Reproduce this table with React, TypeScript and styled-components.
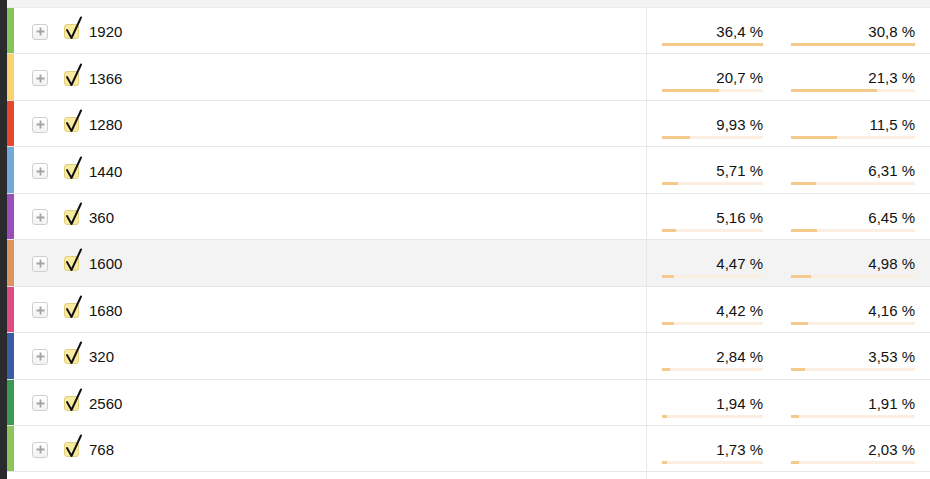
import React from "react";
import styled, { createGlobalStyle } from "styled-components";

const Global = createGlobalStyle`
  html, body { margin: 0; padding: 0; background: #fff; }
  body { font-family: "Liberation Sans", Arial, sans-serif; color: #111; }
`;

const Page = styled.div`
  display: flex;
  width: 930px;
  height: 479px;
  overflow: hidden;
  background: #fff;
`;

const Sidebar = styled.div`
  width: 7px;
  flex: none;
  background: #2b2b2d;
`;

const Table = styled.div`
  flex: 1;
  display: flex;
  flex-direction: column;
`;

const HeaderStrip = styled.div`
  height: 7px;
  flex: none;
  background: #f3f3f3;
  border-bottom: 1px solid #ececec;
`;

const Row = styled.div<{ $hover?: boolean }>`
  display: grid;
  grid-template-columns: 7px 633px 130px 153px;
  height: 45.44px;
  border-bottom: 1px solid #e6e6e6;
  background: ${(p) => (p.$hover ? "#f3f3f3" : "#fff")};
  flex: none;
`;

const Swatch = styled.div<{ $color: string }>`
  background: ${(p) => p.$color};
`;

const NameCell = styled.div`
  display: flex;
  align-items: center;
  padding: 2px 0 0 18px;
  border-right: 1px solid #e8e8e8;
`;

const PlusButton = styled.div`
  width: 16px;
  height: 16px;
  border: 1px solid #cfcfcf;
  border-radius: 3px;
  background: linear-gradient(#ffffff, #f2f2f2);
  display: flex;
  align-items: center;
  justify-content: center;
  box-sizing: border-box;
  flex: none;
`;

const Check = styled.div`
  position: relative;
  width: 15px;
  height: 15px;
  margin-left: 16px;
  border: 1px solid #e2cf7c;
  border-radius: 3px;
  background: #f9eaa2;
  box-sizing: border-box;
  flex: none;
`;

const CheckMark = styled.svg`
  position: absolute;
  left: -1px;
  top: -9px;
  overflow: visible;
`;

const Label = styled.span`
  margin-left: 10px;
  font-size: 15px;
  color: #111;
`;

const ValueCell = styled.div<{ $pl: number; $pr: number }>`
  display: flex;
  flex-direction: column;
  padding: 15px ${(p) => p.$pr}px 0 ${(p) => p.$pl}px;
`;

const Value = styled.div`
  text-align: right;
  font-size: 15px;
  line-height: 17px;
  color: #111;
`;

const Track = styled.div`
  margin-top: 3px;
  height: 3px;
  background: #fcefe1;
`;

const Fill = styled.div`
  height: 100%;
  background: #f4c98c;
`;

const Tail = styled.div`
  display: grid;
  grid-template-columns: 7px 633px 130px 153px;
  flex: 1;
`;

const TailName = styled.div`
  border-right: 1px solid #e8e8e8;
`;

type Item = { name: string; color: string; a: number; b: number };

const items: Item[] = [
  { name: "1920", color: "#86c35b", a: 36.4, b: 30.8 },
  { name: "1366", color: "#f8d46b", a: 20.7, b: 21.3 },
  { name: "1280", color: "#e8472f", a: 9.93, b: 11.5 },
  { name: "1440", color: "#71a8dc", a: 5.71, b: 6.31 },
  { name: "360", color: "#9c4dba", a: 5.16, b: 6.45 },
  { name: "1600", color: "#d9975f", a: 4.47, b: 4.98 },
  { name: "1680", color: "#e04a80", a: 4.42, b: 4.16 },
  { name: "320", color: "#3a5aa6", a: 2.84, b: 3.53 },
  { name: "2560", color: "#3b9a51", a: 1.94, b: 1.91 },
  { name: "768", color: "#8cc55b", a: 1.73, b: 2.03 },
];

const fmt = (v: number) => {
  const s = v >= 10 ? v.toFixed(1) : v.toFixed(2);
  return s.replace(".", ",") + " %";
};

const maxA = 36.4;
const maxB = 30.8;

export default function App() {
  return (
    <Page>
      <Global />
      <Sidebar />
      <Table>
        <HeaderStrip />
        {items.map((it, i) => (
          <Row key={it.name} $hover={i === 5}>
            <Swatch $color={it.color} />
            <NameCell>
              <PlusButton>
                <svg width="9" height="9" viewBox="0 0 9 9">
                  <path d="M4.5 0.5 V8.5 M0.5 4.5 H8.5" stroke="#a4a4a4" strokeWidth="1.8" />
                </svg>
              </PlusButton>
              <Check>
                <CheckMark width="20" height="24" viewBox="0 0 20 24">
                  <path
                    d="M3 14 L7.5 22 L17 1.5"
                    fill="none"
                    stroke="#111"
                    strokeWidth="2"
                    strokeLinecap="round"
                    strokeLinejoin="round"
                  />
                </CheckMark>
              </Check>
              <Label>{it.name}</Label>
            </NameCell>
            <ValueCell $pl={15} $pr={14}>
              <Value>{fmt(it.a)}</Value>
              <Track>
                <Fill style={{ width: `${(it.a / maxA) * 100}%` }} />
              </Track>
            </ValueCell>
            <ValueCell $pl={14} $pr={15}>
              <Value>{fmt(it.b)}</Value>
              <Track>
                <Fill style={{ width: `${(it.b / maxB) * 100}%` }} />
              </Track>
            </ValueCell>
          </Row>
        ))}
        <Tail>
          <div />
          <TailName />
          <div />
          <div />
        </Tail>
      </Table>
    </Page>
  );
}
